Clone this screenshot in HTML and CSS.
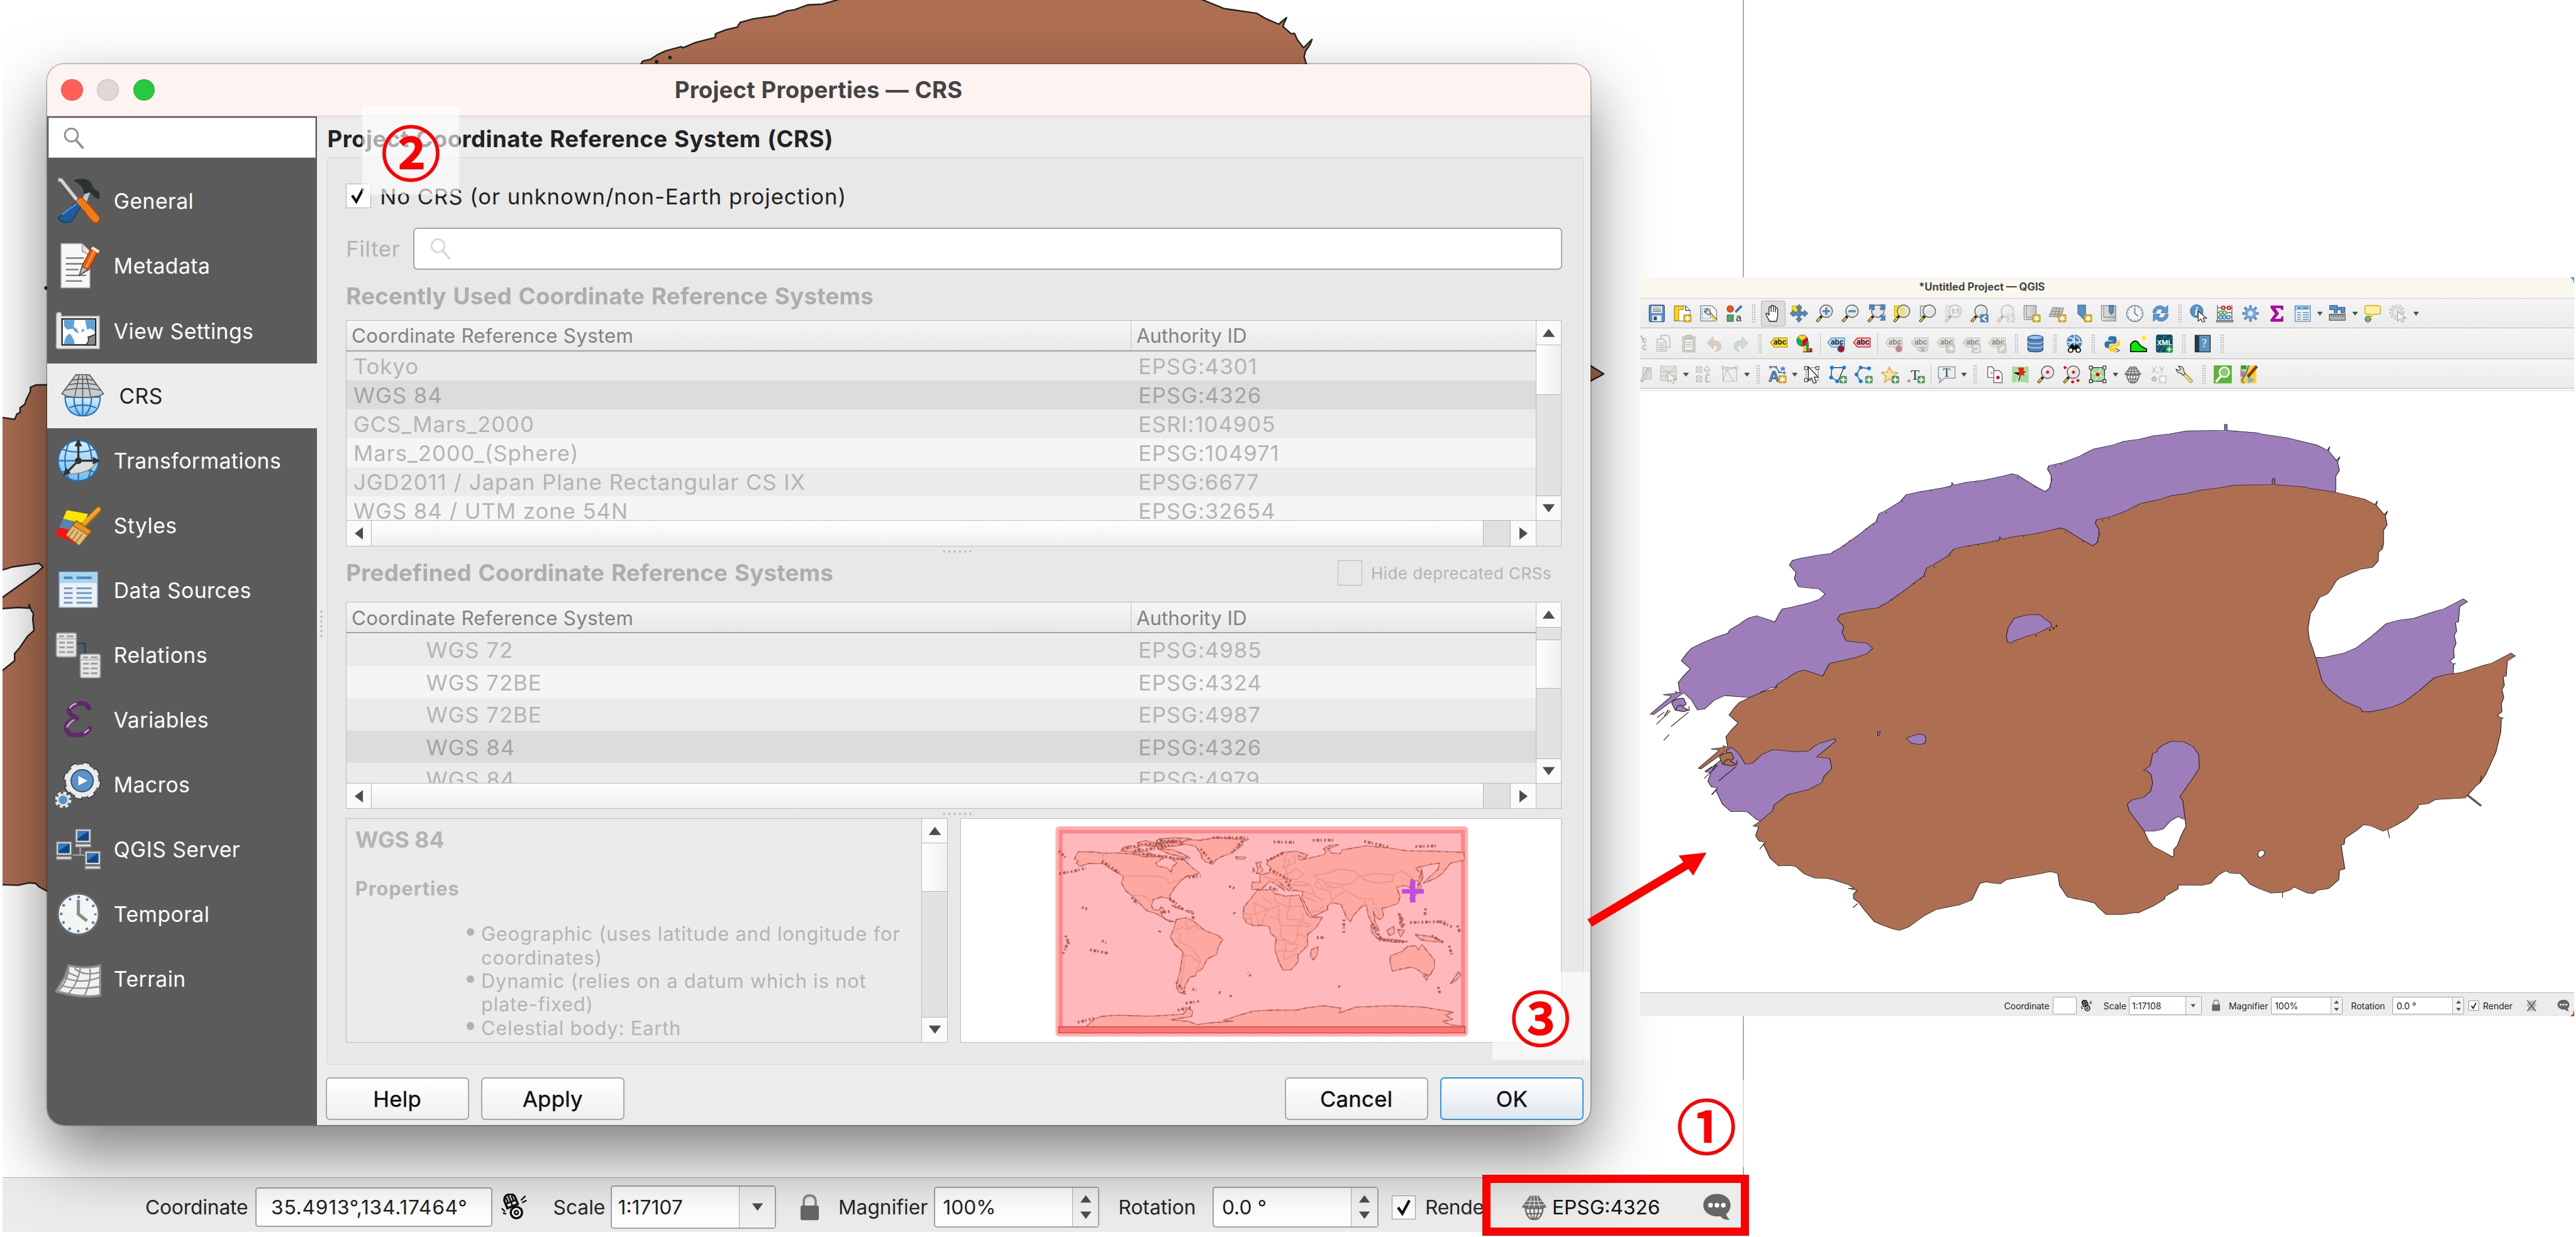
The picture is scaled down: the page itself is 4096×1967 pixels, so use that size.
FILE: index.html
```
<!DOCTYPE html>
<html lang="en">
<head>
<meta charset="utf-8">
<title>Project Properties — CRS</title>
<link rel="stylesheet" href="styles.css">
</head>
<body>
<svg class="defs" width="0" height="0">
<defs>
<linearGradient id="gSky" x1="0" y1="0" x2="0" y2="1"><stop offset="0" stop-color="#d8f0fd"/><stop offset="1" stop-color="#6dbdf0"/></linearGradient>
<linearGradient id="gPage" x1="0" y1="0" x2="1" y2="0"><stop offset="0" stop-color="#e6e6e6"/><stop offset="1" stop-color="#bdbdbd"/></linearGradient>
<path id="land" fill-rule="evenodd" d="M540,398 L560,391 580,386 600,381 615,376 616,368 619,374 640,367 668,362 700,352 715,346 725,350 755,378 770,390 777,382 780,365 780,350 774,335 776,326 800,318 811,312 828,302 838,294 850,285 880,276 900,266 925,261 950,252 975,248 1005,240 1067,239 1067,224 1071,224 1071,239 1123,245 1128,248 1170,257 1220,275 1237,288 1241,279 1239,290 1252,313 1258,304 1254,317 1257,338 1251,352 1251,385 1249,398 1243,405 1242,428 1233,443 1222,446 1215,447 1178,470 1172,478 1165,496 1158,509 1145,518 1136,545 1130,557 1126,595 1128,620 1133,640 1139,668 1149,723 1158,741 1165,750 1187,775 1213,791 1216,800 1230,800 1265,789 1285,776 1310,748 1335,716 1355,708 1380,703 1415,686 1430,680 1462,655 1469,662 1456,674 1454,712 1449,714 1451,735 1447,745 1450,765 1446,780 1447,800 1440,808 1443,814 1449,815 1446,818 1445,850 1437,900 1420,955 1411,975 1405,982 1391,1005 1413,1031 1411,1033 1389,1007 1386,1013 1337,1017 1325,1027 1309,1030 1308,1038 1290,1065 1270,1082 1258,1091 1250,1095 1230,1082 1218,1079 1207,1093 1187,1113 1186,1127 1181,1130 1184,1160 1187,1188 1178,1192 1177,1215 1167,1228 1160,1237 1142,1241 1135,1249 1125,1248 1103,1233 1097,1240 1085,1246 1065,1248 1045,1237 1030,1226 1024,1215 1014,1200 998,1199 990,1193 978,1203 965,1224 950,1229 911,1228 911,1238 890,1256 888,1264 870,1280 845,1297 838,1297 820,1301 792,1301 780,1285 773,1273 760,1268 728,1258 715,1230 712,1200 700,1195 680,1201 665,1205 627,1215 617,1225 597,1222 595,1220 583,1224 570,1265 550,1277 510,1289 490,1305 465,1332 450,1340 440,1337 418,1325 408,1318 392,1290 383,1272 374,1262 374,1250 380,1241 365,1237 375,1236 365,1227 340,1215 330,1212 310,1211 292,1200 278,1182 270,1180 250,1181 236,1162 225,1127 228,1122 218,1120 212,1106 217,1085 208,1082 220,1070 240,1045 243,1030 265,1005 300,992 322,975 325,960 338,940 335,916 325,914 313,912 345,872 343,867 320,877 310,884 300,897 280,899 240,894 222,906 207,927 195,930 185,905 172,887 122,941 117,940 152,895 138,892 160,888 158,884 166,888 163,862 172,845 183,828 168,808 177,790 185,777 203,764 225,750 245,740 248,732 265,717 270,711 280,702 293,697 323,712 330,692 335,680 350,676 380,665 397,656 406,643 395,630 378,628 362,625 355,605 358,590 347,572 352,560 365,555 395,547 416,543 420,538 430,530 465,493 480,475 490,465 495,445 505,438 530,415 Z
M627,612 L630,592 640,569 660,561 682,560 692,572 700,580 702,590 695,594 680,605 660,614 640,625 635,630 628,627Z
M461,866 L470,860 483,855 492,858 494,868 492,878 484,881 470,878Z M414,850 L418,849 417,858 414,859Z
M869,903 L876,900 877,893 885,883 900,873 920,874 935,885 945,905 946,940 935,965 914,1010 919,1020 924,1083 916,1106 910,1130 904,1140 904,1156 901,1158 892,1150 870,1133 862,1118 855,1095 830,1045 827,1028 835,1018 855,1011 866,995 869,975 866,955 860,946 854,945 865,933Z
M1044,1146 L1050,1142 1055,1146 1053,1154 1047,1161 1043,1155Z"/>
<symbol id="tri" viewBox="0 0 12 10"><path d="M0,1H12L6,9Z" fill="#4d4d4d"/></symbol>
<symbol id="lens" viewBox="0 0 24 24"><circle cx="9.5" cy="9" r="6.8" fill="none" stroke="currentColor" stroke-width="1.8"/><path d="M14.3,14.2L22,23" stroke="currentColor" stroke-width="2.4"/></symbol>
<symbol id="star1" viewBox="0 0 24 24"><rect x="13" y="13" width="11" height="11" rx="2" fill="#d1a313"/><path d="M18.5,14.5v8M15,16.5l7,4M15,20.5l7-4" stroke="#fff" stroke-width="1.6"/></symbol>
<symbol id="plus" viewBox="0 0 24 24"><rect x="14" y="14" width="10" height="10" rx="2" fill="#4f9a5c"/><path d="M19,15.5v7M15.5,19h7" stroke="#fff" stroke-width="2"/></symbol>
<symbol id="mag" viewBox="0 0 24 24"><path d="M1.5,23L8,15.5" stroke="#222" stroke-width="3.6"/><path d="M2,22.4L6,17.8" stroke="#ffd21e" stroke-width="2"/><circle cx="14" cy="9" r="8.2" fill="#e4e6e6" stroke="#666" stroke-width="1.2"/><path d="M9,8a6,6 0 0 1 5,-5" stroke="#fff" stroke-width="1.6" fill="none"/></symbol>
<symbol id="cursor" viewBox="0 0 24 24"><path d="M11,9V22L14.5,19.2 17,24 19.6,22.8 17.5,18.2H22Z" fill="#fff" stroke="#222" stroke-width="1"/></symbol>
<symbol id="save" viewBox="0 0 24 24"><rect x="2" y="1" width="20" height="22" rx="2" fill="#5b92c4" stroke="#2e4f70"/><rect x="5" y="2.5" width="14" height="9" fill="#eee"/><path d="M6.5,5H17.5M6.5,7.3H17.5M6.5,9.5H17.5" stroke="#777"/><rect x="6" y="14.5" width="12" height="8" fill="#eee"/><rect x="8" y="16" width="4" height="5" fill="#30506f"/></symbol>
<symbol id="layout" viewBox="0 0 24 24"><path d="M1,2H16L22,8V22H1Z" fill="#fff" stroke="#888"/><path d="M1.5,2.5H13V7H7V21H1.5Z" fill="#fdd51e" stroke="#c19a10"/><path d="M16,2V8H22" fill="none" stroke="#333"/><use href="#star1"/></symbol>
<symbol id="layouts" viewBox="0 0 24 24"><path d="M1,2H16L22,8V22H1Z" fill="#fff" stroke="#777"/><path d="M3,5H14V19H3Z" fill="#eaf2fb" stroke="#9ab8de"/><path d="M12,11L22,22" stroke="#8f7d28" stroke-width="4"/><path d="M13,13L22,22.5" stroke="#f1dd77" stroke-width="2.4"/><path d="M7,6Q12,5 13,9L14,12 12,14 9,12Q6,12 6,8L8,10 10,8Z" fill="#e0e0e0" stroke="#444" stroke-width=".9"/></symbol>
<symbol id="style" viewBox="0 0 24 24"><circle cx="6" cy="6" r="4.3" fill="#df5b1f" stroke="#b5430f"/><path d="M13,10L21,2" stroke="#3d77ad" stroke-width="3.2"/><rect x="2" y="14" width="8" height="8.5" fill="#5ba06b" stroke="#3a7a49"/><text x="13.5" y="22.5" font-size="13" font-family="Liberation Sans" fill="#222">a</text></symbol>
<symbol id="hand" viewBox="0 0 24 24"><path d="M7,22.5C6,19 3,16 2.5,12.5c1.5,-1.5 3,0 4,2V4.5c0,-2 2.6,-2 2.8,0V10 2.8c.2,-2 2.8,-2 3,0V10 3.5c.2,-1.8 2.7,-1.8 2.900,0V10.5 6c.3,-1.8 2.6,-1.6 2.8,0V15c0,3 -1.5,5 -1.7,7.5Z" fill="#fff" stroke="#222" stroke-width="1.1"/></symbol>
<symbol id="panto" viewBox="0 0 24 24"><rect x="3" y="2" width="12" height="13" fill="#ffe31a" stroke="#cdae00"/><path d="M12,0l4,5h-2.5v5H19V7.5l5,4.5-5,4.5V14h-5.5v5H16l-4,5-4-5h2.500v-5H5v2.500L0,12l5-4.500V10h5.500V5H8Z" fill="#5089c0" stroke="#2f5f90" stroke-width=".7"/></symbol>
<symbol id="zin" viewBox="0 0 24 24"><use href="#mag"/><path d="M14,4v10M9,9h10" stroke="#4a86c0" stroke-width="2.8"/></symbol>
<symbol id="zout" viewBox="0 0 24 24"><use href="#mag"/><path d="M9,9h10" stroke="#4a86c0" stroke-width="2.8"/></symbol>
<symbol id="zfull" viewBox="0 0 24 24"><use href="#mag"/><path d="M3,0h7l-2.500,2.500 3,3-2.500,2.500-3-3L3,7.500ZM24,0h-7l2.500,2.500-3,3L19,8l3-3 2,2.500ZM24,21h-7l2.500-2.500-3-3L19,13l3,3 2-2.500Z" fill="#5089c0" stroke="#2f5f90" stroke-width=".7"/></symbol>
<symbol id="zsel" viewBox="0 0 24 24"><rect x="2" y="2" width="14" height="14" fill="#ffe31a" stroke="#cdae00"/><use href="#mag"/><path d="M9,3H16V15H11Q7,11 9,3Z" fill="#f0df78"/></symbol>
<symbol id="zlay" viewBox="0 0 24 24"><rect x="2" y="2" width="13" height="14" fill="#ddd" stroke="#888"/><use href="#mag"/></symbol>
<symbol id="znat" viewBox="0 0 24 24"><g opacity=".35"><rect x="2" y="2" width="13" height="14" fill="#ddd" stroke="#888"/><use href="#mag"/><text x="8.5" y="12.5" font-size="9" font-family="Inter" font-weight="700" fill="#444">1:1</text></g></symbol>
<symbol id="zlast" viewBox="0 0 24 24"><use href="#mag"/><rect x="13" y="13" width="11" height="11" fill="#4f87bd"/><path d="M21,15l-4.500,3.500L21,22" stroke="#fff" stroke-width="2" fill="none"/></symbol>
<symbol id="znext" viewBox="0 0 24 24"><g opacity=".35"><use href="#mag"/><rect x="13" y="13" width="11" height="11" fill="#9ab"/><path d="M16,15l4.500,3.500L16,22" stroke="#fff" stroke-width="2" fill="none"/></g></symbol>
<symbol id="view" viewBox="0 0 24 24"><path d="M2,1.500H18V20H5Q2,22 2,17Z" fill="url(#gPage)" stroke="#8a8a8a"/><path d="M5,1.500V17H18" fill="none" stroke="#8a8a8a"/><use href="#star1"/></symbol>
<symbol id="v3d" viewBox="0 0 24 24"><path d="M6,4 20,5 17,17 1,16Z" fill="#c4c4c4" stroke="#8c8c8c"/><path d="M11,4 8,16M15,5 12,17M4,9 19,10M2,13 18,13" stroke="#8c8c8c"/><use href="#star1"/></symbol>
<symbol id="bmark" viewBox="0 0 24 24"><path d="M5,1H15V22L10,17 5,12Z" fill="#5b92c4" stroke="#3d6a96"/><use href="#star1"/></symbol>
<symbol id="bmarks" viewBox="0 0 24 24"><path d="M2,1.500H21V22H5Q2,22 2,17Z" fill="url(#gPage)" stroke="#8a8a8a"/><path d="M5,1.500V17H21" fill="none" stroke="#8a8a8a"/><path d="M12.500,1.500h5V10l-2.500,3-2.500-3Z" fill="#5b92c4" stroke="#3d5a76"/></symbol>
<symbol id="clock" viewBox="0 0 24 24"><circle cx="12" cy="12" r="10.700" fill="#f4f6f6" stroke="#6a6a6a" stroke-width="1"/><circle cx="12" cy="12" r="8.900" fill="none" stroke="#4b82b8" stroke-width="1.300" stroke-dasharray="1.300 3.360" stroke-dashoffset=".65"/><path d="M12,4.500V12L16.500,15.500" fill="none" stroke="#8a8a86" stroke-width="1.700"/></symbol>
<symbol id="refresh" viewBox="0 0 24 24"><path d="M2,11C2,2 13,-1 18,5L21.500,1.500V11H12.500L15,8C11,4 6,7 6,11Z" fill="#5f9bd3" stroke="#3470a9" stroke-width=".8"/><path d="M22,13C22,22 11,25 6,19L2.500,22.500V13H11.500L9,16C13,20 18,17 18,13Z" fill="#5f9bd3" stroke="#3470a9" stroke-width=".8"/></symbol>
<symbol id="info" viewBox="0 0 24 24"><circle cx="9" cy="9" r="8.500" fill="#5b92c4" stroke="#2f5f90" stroke-width=".7"/><text x="6.500" y="14.500" font-size="15" font-style="italic" font-weight="700" font-family="Liberation Serif" fill="#fff">i</text><use href="#cursor"/></symbol>
<symbol id="abacus" viewBox="0 0 24 24"><path d="M2.500,1V21M21.500,1V21M2,4.500H22M2,11H22M2,17H22" stroke="#666" stroke-width="1.100"/><g stroke-width="1.100"><g fill="#f8aaaa" stroke="#c00000"><circle cx="10" cy="4.500" r="2.300"/><circle cx="17.500" cy="4.500" r="2.300"/></g><g fill="#b8f0b8" stroke="#3a9a3a"><circle cx="7" cy="11" r="2.300"/><circle cx="12" cy="11" r="2.300"/></g><g fill="#bcdcf8" stroke="#3a70a8"><circle cx="6.500" cy="17" r="2.300"/><circle cx="11.500" cy="17" r="2.300"/><circle cx="17" cy="17" r="2.300"/></g></g><rect x="1" y="21" width="22" height="2.500" fill="#999" stroke="#444" stroke-width=".6"/></symbol>
<symbol id="gear" viewBox="0 0 24 24"><path d="M12,1V23M1,12H23M4,4L20,20M20,4L4,20" stroke="#5b8fc8" stroke-width="3.400"/><circle cx="12" cy="12" r="5.500" fill="#e4edf6" stroke="#74a5da" stroke-width="4"/></symbol>
<symbol id="sigma" viewBox="0 0 24 24"><path d="M4,2H20V7H18C17.500,5 17,4.500 14,4.500H9L14.500,12 8.500,19.500H14C17,19.500 18,19 18.500,16H20V22.500H4V20L10,12.500 4,4.500Z" fill="#c400b4" stroke="#6a0062" stroke-width=".7"/></symbol>
<symbol id="table" viewBox="0 0 24 24"><rect x="2" y="2" width="20" height="20.500" fill="#eef1f3" stroke="#4f87bd"/><rect x="2.500" y="2.500" width="19" height="5" fill="#9ccbe8"/><path d="M5,5h5M12,5h7" stroke="#3d77ad" stroke-width="1.500"/><path d="M4.500,11h5M12,11h8M4.500,14h5M12,14h8M4.500,17h5M12,17h8M4.500,20h5M12,20h8" stroke="#5b92c4" stroke-width="1.300"/></symbol>
<symbol id="measure" viewBox="0 0 24 24"><path d="M2,1.500H12V4H22V11H17V7H12V11H8V7H2Z" fill="#5b92c4" stroke="#2f5f90"/><rect x="1.500" y="13" width="21" height="8" fill="#b5b5b5" stroke="#555"/><path d="M4,13v3M7,13v4M10,13v3M13,13v4M16,13v3M19,13v4" stroke="#555"/></symbol>
<symbol id="tip" viewBox="0 0 24 24"><circle cx="6" cy="19.500" r="3.800" fill="#6dbb72" stroke="#333" stroke-width=".8"/><path d="M4,1.500H20Q22.500,1.500 22.500,4V10Q22.500,13 20,13H13L8,19.500 9.500,13H4Q2,13 2,10V4Q2,1.500 4,1.500Z" fill="#fdf0a0" stroke="#caa400"/></symbol>
<symbol id="action" viewBox="0 0 24 24"><g opacity=".4"><circle cx="10" cy="10" r="9" fill="none" stroke="#999" stroke-width="3" stroke-dasharray="3 2"/><circle cx="10" cy="10" r="6.500" fill="#ccc" stroke="#888"/><path d="M8,6.500V13.500L14,10Z" fill="#fff"/><use href="#cursor"/></g></symbol>
<symbol id="cut" viewBox="0 0 24 24"><path d="M17,1L21,11" stroke="#bbb" stroke-width="2"/><circle cx="22" cy="8" r="2.500" fill="none" stroke="#c5bcbc" stroke-width="1.800"/><circle cx="22" cy="17" r="3" fill="none" stroke="#c5bcbc" stroke-width="2"/></symbol>
<symbol id="copy" viewBox="0 0 24 24"><g fill="#efefef" stroke="#b4b4b4"><path d="M9,1H18L21,4V17H9Z"/><path d="M4,6H12L16,10V22H4Z"/><path d="M6,11h8M6,14h8M6,17h8M6,19.500h8"/></g></symbol>
<symbol id="paste" viewBox="0 0 24 24"><g stroke="#b4b4ae"><rect x="4" y="3" width="16" height="20" fill="#dcdcd4"/><rect x="6.500" y="6" width="11" height="15" fill="#f2f2f2"/><rect x="8" y="1" width="8" height="4" fill="#ccc"/><path d="M8,10h8M8,13h8M8,16h8"/></g></symbol>
<symbol id="undo" viewBox="0 0 24 24"><path d="M2,11L10,3V8C18,8 22,12 20,18 19,21 16,22 13,22 18,18 17,14 10,14V19Z" fill="#ddcdc8" stroke="#cbb9b4" stroke-width=".8"/></symbol>
<symbol id="redo" viewBox="0 0 24 24"><path d="M22,11L14,3V8C6,8 2,12 4,18 5,21 8,22 11,22 6,18 7,14 14,14V19Z" fill="#cfd9d2" stroke="#bac6be" stroke-width=".8"/></symbol>
<symbol id="tag" viewBox="0 0 24 24"><path d="M6,4.500H23V16.500H6L1,10.500Z" stroke-width="1.100"/><text x="5" y="13.700" font-size="9.500" font-weight="700" font-family="Inter" stroke="none" class="tagtxt">abc</text></symbol>
<symbol id="pie" viewBox="0 0 24 24"><circle cx="9" cy="8" r="7.500" fill="#ffd21e" stroke="#333" stroke-width=".6"/><path d="M9,8V15.500A7.500,7.500 0 0 1 3,3.500Z" fill="#19a84a"/><path d="M9,8L15,3.500A7.500,7.500 0 0 1 9,15.500Z" fill="#c3102c"/><path d="M10,15h3.500v8H10z" fill="#ffc91e"/><path d="M14,9.500h3.500v13.500H14z" fill="#1ba03a"/><path d="M18,18h4v5h-4z" fill="#d01020"/><path d="M10,23H22" stroke="#800" stroke-width="1"/></symbol>
<symbol id="pinr" viewBox="0 0 24 24"><path d="M18.500,11v5" stroke="#555" stroke-width="3"/><circle cx="18.500" cy="19" r="4.500" fill="#b5101e"/></symbol>
<symbol id="db" viewBox="0 0 24 24"><path d="M2,4V20C2,24 22,24 22,20V4Z" fill="#4f87bd" stroke="#2c4c6c"/><ellipse cx="12" cy="4" rx="10" ry="3" fill="#9cc4e8" stroke="#2c4c6c"/><path d="M2,9.500C3,13 21,13 22,9.500M2,15C3,18.500 21,18.500 22,15" fill="none" stroke="#c4dcf0" stroke-width="1.200"/></symbol>
<symbol id="meta" viewBox="0 0 24 24"><circle cx="12" cy="10" r="10" fill="#4a80b4"/><path d="M5,5C8,3 12,6 10,9S5,12 4,14M14,3C18,4 20,8 18,10S14,12 16,15M2,10H22M12,0V18" stroke="#cfe3f5" stroke-width="1.800" fill="none"/><path d="M4,20L8,13h3l1,3 1-3h3l4,7Z" fill="#111"/><circle cx="7" cy="20.500" r="3" fill="#fff" stroke="#111" stroke-width="1.600"/><circle cx="17" cy="20.500" r="3" fill="#fff" stroke="#111" stroke-width="1.600"/></symbol>
<symbol id="python" viewBox="0 0 24 24"><path d="M11,2C6,2 6,4 6,8H12V9H4C0,9 0,18 5,18H7V15C7,12 9,12 11,12H15C17,12 17,10 17,8V5C17,2 14,2 11,2Z" fill="#2f74a8"/><path d="M12,23C17,23 17,21 17,17H11V16H19C23,16 23,7 18,7V10C18,13 16,13 14,13H10C8,13 7,15 7,17V20C7,23 10,23 12,23Z" fill="#fdd02e"/><path d="M16,18.500l5,2.500-5,2.500" stroke="#444" fill="none"/></symbol>
<symbol id="green" viewBox="0 0 24 24"><path d="M1.500,22V13Q6,6 11,10 14,16 22.500,19V22.500H1.500Z" fill="#00ee00" stroke="#111" stroke-width="1.500"/><path d="M17,1l2,2 3-2-1,3 2,2-3,1-3,1z" fill="#ffee00"/></symbol>
<symbol id="xml" viewBox="0 0 24 24"><rect x="1" y="0" width="22" height="24" rx="3" fill="#0e4f66"/><path d="M2,20C8,16 6,6 14,1M6,23C12,18 12,8 22,4" stroke="#4e8497" fill="none"/><text x="2" y="14" font-size="9" font-weight="700" font-family="Inter" fill="#fff">XML</text><rect x="14" y="15" width="9" height="9" rx="1" fill="#119b3f"/><path d="M18.500,16v7M15,19.500h7" stroke="#fff" stroke-width="1.500"/></symbol>
<symbol id="helpb" viewBox="0 0 24 24"><rect x="2" y="1" width="20" height="22" fill="#5b92c4" stroke="#222"/><rect x="2.500" y="1.500" width="5" height="21" fill="#26394e"/><text x="10.500" y="17" font-size="15" font-family="Liberation Serif" fill="#fff">?</text></symbol>
<symbol id="pencil" viewBox="0 0 24 24"><path d="M12,3H23V18H12Z" fill="#ddd" stroke="#bbb"/><path d="M10,22L20,4" stroke="#b5b0a8" stroke-width="4"/><path d="M11,20L20,5" stroke="#e4e0d8" stroke-width="2"/></symbol>
<symbol id="selgrey" viewBox="0 0 24 24"><g opacity=".5"><rect x="1" y="1" width="21" height="19" fill="#d8d6c4" stroke="#999"/><path d="M1,1L12,10 22,1M1,8H22M8,8V20M1,14H22" stroke="#999" fill="none"/></g><g opacity=".7"><path d="M11,9V22L14.500,19.200 17,24 19.600,22.800 17.500,18.200H22Z" fill="#fff" stroke="#999"/></g></symbol>
<symbol id="grideps" viewBox="0 0 24 24"><g fill="none" stroke="#bdbdbd"><path d="M2,2h7v7H2zM2,2l7,7M9,2L2,9M2,14h7v8H2zM2,14l7,8M9,14L2,22M16,1l4,5-4,4-4-4zM12,6h8"/><path d="M20,13C14,11 13,17 17,17 12,18 14,24 20,21" stroke-width="2"/></g></symbol>
<symbol id="polygrey" viewBox="0 0 24 24"><g fill="#eee" stroke="#bdbcb4"><path d="M3,3H21V21H3ZM3,21L8,6 21,3M8,6L17,21" /><circle cx="3" cy="3" r="1.800"/><circle cx="21" cy="3" r="1.800"/><circle cx="8" cy="4" r="1.800"/></g></symbol>
<symbol id="anno" viewBox="0 0 24 24"><path d="M2,2h8l4,7 7,1" stroke="#333" fill="none"/><g fill="#5089c0"><circle cx="2.500" cy="2.500" r="1.800"/><circle cx="10" cy="2.500" r="1.800"/><circle cx="14" cy="9" r="1.800"/><circle cx="21" cy="10" r="1.800"/><path d="M19,0l1,3h3l-2,2 1,3-3-2-3,2 1-3-2-2h3z"/></g><text x="0" y="22" font-size="20" font-weight="700" font-family="Liberation Sans" fill="#5b92c4" stroke="#234" stroke-width=".6">A</text><use href="#star1"/></symbol>
<symbol id="modify" viewBox="0 0 24 24"><path d="M4,3H20V20H4Z" fill="none" stroke="#555" stroke-dasharray="2 1.500"/><g fill="#fff" stroke="#444"><path d="M2,1.500h4v4H2zM17,1.500h4v4h-4zM2,17.500h4v4H2z"/></g><path d="M7,2V20L11,16.500 14,24 17.500,22.500 14.500,15.500H20Z" fill="#fff" stroke="#222" stroke-width="1.100"/></symbol>
<symbol id="polyadd" viewBox="0 0 24 24"><path d="M4,3H20L12,21 3,16Z" fill="none" stroke="#222"/><g fill="#0a7cff"><circle cx="4" cy="3" r="2.500"/><circle cx="20" cy="3" r="2.500"/><circle cx="3" cy="16" r="2.500"/><circle cx="11" cy="21" r="2.500"/></g><use href="#plus"/></symbol>
<symbol id="lineadd" viewBox="0 0 24 24"><path d="M20,4L8,3 2,12 8,21" fill="none" stroke="#222"/><g fill="#0a7cff"><circle cx="19" cy="4" r="2.500"/><circle cx="8" cy="3" r="2.500"/><circle cx="2.500" cy="12" r="2.500"/><circle cx="8" cy="21" r="2.500"/></g><use href="#plus"/></symbol>
<symbol id="staradd" viewBox="0 0 24 24"><path d="M11,2l3,7 8,.5-6,5 2,8-7-4.500-6.500,4.500 2-8-6-5 7.500-.5z" fill="#fde0a0" stroke="#d8923a"/><use href="#plus"/></symbol>
<symbol id="textadd" viewBox="0 0 24 24"><rect x="1" y="19" width="3.500" height="3.500" fill="#999"/><text x="5" y="19" font-size="19" font-family="Liberation Serif" fill="#333">T</text><use href="#plus"/></symbol>
<symbol id="textbox" viewBox="0 0 24 24"><path d="M1,2H23V17H9L2,23 4,17H1Z" fill="#e4f0f4" stroke="#888"/><text x="7" y="15" font-size="16" font-family="Liberation Serif" fill="#333">T</text></symbol>
<symbol id="pagepin" viewBox="0 0 24 24"><g fill="#fff" stroke="#555"><path d="M3,2H9L12,6V16H3Z"/><path d="M11,7H18L22,11V23H11Z"/></g><circle cx="8" cy="10" r="1.600" fill="#f99"/><circle cx="16.500" cy="16" r="2.200" fill="#e00"/></symbol>
<symbol id="mappin" viewBox="0 0 24 24"><path d="M1,1Q12,3 23,1V23Q12,21 1,23Z" fill="#9fe0a0"/><path d="M1,10L10,14 23,8M6,23L12,12" stroke="#d4f4c8" stroke-width="1.500"/><path d="M9,3h8l-1,7 2,3H8l3-3z" fill="#ff1a10"/><path d="M12,13L10,20" stroke="#800" stroke-width="1.300"/></symbol>
<symbol id="magdot" viewBox="0 0 24 24"><use href="#mag"/><circle cx="14" cy="9" r="2" fill="#f00"/></symbol>
<symbol id="magdots" viewBox="0 0 24 24"><use href="#mag"/><g fill="#f00"><circle cx="14" cy="9" r="2"/><circle cx="3" cy="3" r="2"/><circle cx="13" cy="22" r="2"/><circle cx="20" cy="20" r="2"/></g></symbol>
<symbol id="mapext" viewBox="0 0 24 24"><rect x="3" y="3" width="18" height="18" fill="#a8dca0" stroke="#222"/><path d="M3,9L21,16M9,21L16,3" stroke="#e8f8e0"/><circle cx="12" cy="12" r="2.500" fill="#e00"/><g fill="#fff" stroke="#222"><path d="M1,1h4v4H1zM19,1h4v4h-4zM1,19h4v4H1zM19,19h4v4h-4z"/></g></symbol>
<symbol id="crsg" viewBox="0 0 24 24"><path d="M8,1.500H16L23.500,12 20,13H4L.5,12Z" fill="#707070"/><path d="M4,13Q5,23 12,23.500 19,23 20,13Z" fill="#f4f4f4" stroke="#707070" stroke-width="1.500"/><path d="M12,13V23M8,13Q8,19 11,23M16,13Q16,19 13,23M5,18H19" stroke="#707070" stroke-width="1.300" fill="none"/><path d="M12,2V12M9.500,2L7,12M14.500,2L17,12M5,6.500H19M3,9.700H21" stroke="#ddd" stroke-width=".9"/></symbol>
<symbol id="xy" viewBox="0 0 24 24"><text x="2" y="10" font-size="11" font-family="Inter" fill="#bbb">X,Y</text><circle cx="6" cy="18" r="3" fill="#ccc" stroke="#aaa"/><rect x="12" y="13" width="11" height="11" rx="2" fill="#d8d6cc"/><path d="M17.500,14.500v8M14,16.500l7,4M14,20.500l7-4" stroke="#fff" stroke-width="1.600"/></symbol>
<symbol id="wrench" viewBox="0 0 24 24"><path d="M10,10L22,22" stroke="#8f7d28" stroke-width="4.600"/><path d="M12,12.500L21.500,21.700" stroke="#f1dd77" stroke-width="3"/><path d="M4,1Q11,1 11,7L13,11 10,13 7,10Q2,11 1,5L4,7 7,5Z" fill="#e0e0e0" stroke="#444"/></symbol>
<symbol id="gsearch" viewBox="0 0 24 24"><path d="M0,0H24V24H0Z" fill="#5cb338"/><circle cx="14" cy="9" r="6.500" fill="#8ccc74" stroke="#fff" stroke-width="2"/><path d="M9.500,14L3,22" stroke="#fff" stroke-width="3"/></symbol>
<symbol id="osm" viewBox="0 0 24 24"><path d="M1,0H22V24H1Z" fill="#ffd22a"/><path d="M1,5L8,9 1,14ZM10,12L20,20 12,24Z" fill="#7fb0ee"/><path d="M2,0H9V5H2Z" fill="#18a058"/><path d="M2,9H7V15H2Z" fill="#d06a90"/><path d="M12,0L9,10 3,20 6,24" stroke="#3f7fe0" stroke-width="2" fill="none"/><path d="M11,15L23,1" stroke="#8c3a10" stroke-width="4"/></symbol>
<symbol id="bubble" viewBox="0 0 24 24"><path d="M12,.8C19,.8 23.700,5 23.700,10.500 23.700,14 22,16.500 20,18 20.500,20.500 22,22 23,23 19,23.300 16.500,22 15,20 6,21 .3,16 .3,10.500 .3,5 5,.8 12,.8Z" fill="#666"/><g fill="#fff"><circle cx="6.500" cy="10.500" r="2"/><circle cx="12" cy="10.500" r="2"/><circle cx="17.500" cy="10.500" r="2"/></g></symbol>
<symbol id="lock" viewBox="0 0 24 30"><path d="M5.500,14V9Q5.500,2 12,2T18.500,9V14" fill="none" stroke="#8a8a8a" stroke-width="2.600"/><rect x="2" y="13" width="20" height="16" rx="2" fill="#666"/></symbol>
<symbol id="mouse" viewBox="0 0 24 24"><g transform="rotate(-22 11 12)" fill="none" stroke="#111"><path d="M6,11V4Q7,0 11,0T16,4V11Z" stroke-width="2"/><path d="M11,1V11M6,7H16M8.500,2V7M13.500,2V7" stroke-width="1.500"/><circle cx="12" cy="17.500" r="5" stroke-width="2" fill="#fff"/><circle cx="12" cy="17.500" r="1.700" stroke-width="1.500"/></g><path d="M1,13l3,3M2,17l3,1M18,6l4-4M19,8l4-2" stroke="#111" stroke-width="1.300"/></symbol>
<symbol id="nocrs" viewBox="0 0 24 24"><path d="M8,1.500H16L23.500,12 20,13Q19,23 12,23.500 5,23 4,13L.5,12Z" fill="#bbb"/><path d="M3,1L21,24M21,1L3,24" stroke="#666" stroke-width="2.600"/></symbol>
<symbol id="tools" viewBox="0 0 48 48"><path d="M3,2L6,2 25,26" stroke="#cfd4d6" stroke-width="3.500" fill="none"/><path d="M34,14L29,28" stroke="#c4c8ca" stroke-width="5"/><path d="M20,2Q30,-1 37,4L40,11 46,15 46,22 42,21 36,15 30,17Q29,7 20,4Z" fill="#2c3232"/><path d="M22,25Q25,20 29,26L17,45Q8,49 3,42Z" fill="#1f5c9c" stroke="#123c6a"/><path d="M7,38L22,27" stroke="#4a8cc8" stroke-width="2"/><path d="M21,24L27,20Q34,26 46,41 47,46 42,47 38,46 30,34 24,28Z" fill="#f37b16" stroke="#c04a00"/></symbol>
<symbol id="metad" viewBox="0 0 48 48"><path d="M6,1H28L36,9V47H6Z" fill="#f7f7f7" stroke="#bbb"/><path d="M28,1V9L36,13" fill="#ddd" stroke="#999"/><path d="M11,16H30M11,22H30M11,28H24M11,34H32M11,40H28" stroke="#777" stroke-width="1.500"/><path d="M25,34L28,24 38,5 45,9 35,28Z" fill="#ee5a1c" stroke="#8a3a10"/><path d="M37,6L39,4 46,8 45,11Z" fill="#eee"/><path d="M25,34L28,25 34,28Z" fill="#bbb" stroke="#555"/><path d="M41,8L32,26" stroke="#ff9a30" stroke-width="2"/></symbol>
<symbol id="viewset" viewBox="0 0 48 48"><path d="M1,8Q1,5 4,5T6,9H46V43H3Q0,43 1,38Z" fill="#e8e8e8" stroke="#aaa"/><rect x="7" y="12" width="35" height="27" fill="#fff" stroke="#222" stroke-width="1.500"/><path d="M9,13H20L19,22 12,23 9,19ZM31,13H41V25L37,22 33,23ZM9,38Q10,29 15,27 20,33 20,38Z" fill="#5ba3dc"/><path d="M17,19l5,3 3,5 -5,-2zM28,22l3,2 -4,2z" fill="#5ba3dc"/><path d="M42,28V39L32,39Q36,34 34,31Z" fill="#888" stroke="#222"/></symbol>
<symbol id="crsic" viewBox="0 0 48 48"><path d="M4,26H44Q43,47 24,47.500 5,47 4,26Z" fill="url(#gSky)" stroke="#2f6fb0" stroke-width="1.500"/><path d="M24,26V47M14,26Q14,40 22,47M34,26Q34,40 26,47M9,38Q24,32 39,38" stroke="#2f6fb0" stroke-width="1.500" fill="none"/><path d="M16,1Q24,-.5 32,1L47.500,22 42,25Q24,28 6,25L.5,22Z" fill="#c8ccce" stroke="#555" stroke-width="1.200"/><path d="M24,1V26M20,1L15,25M28,1L33,25M12,7Q24,4 36,7M8,12Q24,9 40,12M4,18Q24,14 44,18" stroke="#555" stroke-width="1.100" fill="none"/></symbol>
<symbol id="transf" viewBox="0 0 48 48"><circle cx="24" cy="24" r="21" fill="url(#gSky)" stroke="#2f6fb0" stroke-width="1.400"/><path d="M24,3V45M3,24H45M14,6Q6,24 14,43M34,6Q42,24 34,43M7,12Q24,18 41,12M7,36Q24,30 41,36" stroke="#2f6fb0" stroke-width="1.500" fill="none"/><path d="M24,24H44Q38,38 12,38Z" fill="#ddd" stroke="#888"/><path d="M24,24V5M24,24H42M24,24L11,37" stroke="#333" stroke-width="2.200"/><path d="M24,1l-4,8h8zM47,24l-8-4v8zM8,40l3-9 5,6z" fill="#333"/><circle cx="24" cy="24" r="3.500" fill="#333"/></symbol>
<symbol id="styles" viewBox="0 0 48 48"><path d="M12,8L34,12 30,22 8,17Z" fill="#ffe600"/><path d="M8,17L30,22 26,32 4,26Z" fill="#5b84ad"/><path d="M4,26L26,32 24,44 0,34Z" fill="#ff1010"/><path d="M30,23L45,8" stroke="#b36a10" stroke-width="6" stroke-linecap="round"/><path d="M30,22L45,7" stroke="#f0a42a" stroke-width="4" stroke-linecap="round"/><path d="M22,19L38,30 34,34 18,24Z" fill="#e8951c" stroke="#8a5a10"/><path d="M18,24L34,34 25,45 11,34Z" fill="#e6bb74" stroke="#9a6c2c"/><path d="M20,28l-6,8M24,30l-6,9M28,33l-7,9" stroke="#9a6c2c"/></symbol>
<symbol id="dsrc" viewBox="0 0 48 48"><rect x="4" y="5" width="40" height="37" fill="#f0f0f2" stroke="#7fa9cf"/><rect x="4.500" y="5.500" width="39" height="11" fill="#a6d5f0"/><path d="M9,11h9M22,11h16" stroke="#4c86bc" stroke-width="2.500"/><path d="M9,22h9M22,22h16M9,27h9M22,27h16M9,32h9M22,32h16M9,37h9M22,37h16" stroke="#6a9fd0" stroke-width="2"/></symbol>
<symbol id="relat" viewBox="0 0 48 48"><path d="M22,12H31V24" stroke="#24476a" stroke-width="2" fill="none"/><g id="rt"><rect x="1" y="1" width="21" height="25" rx="2" fill="#e4e4e2" stroke="#999" stroke-width="1.200"/><path d="M1.500,7H21.500" stroke="#aaa"/><path d="M4,4.500h5M12,4.500h7M4,11h6M12,11h7M4,16h6M12,16h7M4,21h6M12,21h7" stroke="#999" stroke-width="1.800"/></g><use href="#rt" x="25" y="22"/></symbol>
<symbol id="vari" viewBox="0 0 48 48"><path d="M35,12Q33,6 25,7T14,14Q15,20 24,22.500 12,24 11,32 12,40 22,40T36,33" fill="none" stroke="#5f2b66" stroke-width="4.800" stroke-linecap="round"/><path d="M15,12Q17,8 22,7M12,32Q15,26 20,24M30,38L35,34" stroke="#c9a6cc" stroke-width="1.800" fill="none"/></symbol>
<symbol id="macro" viewBox="0 0 48 48"><circle cx="28" cy="20" r="17.500" fill="none" stroke="#333" stroke-width="4.500" stroke-dasharray="8 5.740"/><circle cx="28" cy="20" r="17" fill="#e8e8e8" stroke="#e8e8e8" stroke-width="3.500" stroke-dasharray="6.350 7" stroke-dashoffset="-.8"/><circle cx="28" cy="20" r="15.500" fill="#ececec"/><circle cx="28" cy="20" r="11.500" fill="#5b92c8" stroke="#2e4f70" stroke-width="1.300"/><path d="M24,15V25L33.500,20Z" fill="#fff"/><circle cx="8" cy="40" r="7" fill="none" stroke="#e4e4e4" stroke-width="3.500" stroke-dasharray="3.200 2.300"/><circle cx="8" cy="40" r="5.500" fill="#5b92c8" stroke="#e4e4e4" stroke-width="1.800"/></symbol>
<symbol id="server" viewBox="0 0 48 48"><path d="M18,30H32M26,22V30" stroke="#999" stroke-width="1.800"/><g id="pc"><rect x="21" y="3" width="16" height="14" fill="#dcdcd4" stroke="#777"/><rect x="23" y="5" width="12" height="10" fill="#10458a"/><path d="M23,5H35L23,13Z" fill="#3a78bc"/><rect x="21" y="18.500" width="16" height="3" fill="#dcdcd4" stroke="#888"/></g><use href="#pc" x="-20" y="13"/><use href="#pc" x="10" y="23"/></symbol>
<symbol id="terr" viewBox="0 0 48 48"><path d="M14,10Q32,14 47,10V41Q30,45 1,37Q6,28 10,22Z" fill="#f0f0f0" stroke="#8d8d8d" stroke-width="2.400"/><path d="M14,11Q14,24 4,36M26,13Q24,28 14,39M36,13Q38,26 30,42M10,23Q28,30 47,22M6,31Q24,36 47,32M20,13Q30,22 47,17M12,17L24,22" stroke="#8d8d8d" stroke-width="1.500" fill="none"/></symbol>
</defs>
</svg>

<main class="stage">
  <section class="qgis">
    <div class="canvas">
      <svg class="bgmap" viewBox="4 0 2877 1947" width="2877" height="1947">
        <g fill="#ae6e52" stroke="#222" stroke-width="2.500" stroke-linejoin="round">
          <path d="M1059,106L1062,101 1075,98 1087,90 1100,84 1126,77 1128,79 1150,70 1182,62V56L1200,49 1218,45 1223,37 1245,31 1281,26 1300,18 1313,16 1335,8 1358,7 1390,-2H1983L2022,14 2077,22 2090,30 2113,40 2126,29 2122,38 2120,44 2134,56 2139,55 2144,66 2154,79 2168,65 2165,73 2157,85 2155,94 2160,110V300H1059Z"/>
          <path d="M2620,598L2628,604 2650,618 2628,630Z"/>
          <path d="M0,690H4L24,693 28,684 33,682 33,674 41,668 43,661 50,647 50,640 60,636 90,636V1475L78,1473 65,1466 59,1460 48,1459 30,1463 0,1462Z"/>
          <path d="M0,943L20,937 64,931 71,937 60,947 38,963 0,990Z" fill="#fff"/>
          <path d="M0,1006L30,1004 48,1005V999L51,1008 55,1014 54,1022 56,1042 45,1052 32,1071 24,1080V1092L4,1108H0Z" fill="#fff"/>
        </g>
        <g fill="#222"><circle cx="1107" cy="95" r="3"/><circle cx="1085" cy="102" r="3"/><circle cx="76" cy="476" r="3"/></g>
      </svg>
    </div>
    <footer class="status">
      <label class="lb w-coord">Coordinate</label>
      <div class="fld f-coord">35.4913°,134.17464°</div>
      <svg class="s-mouse"><use href="#mouse"/></svg>
      <label class="lb w-scale">Scale</label>
      <div class="fld combo"><span>1:17107</span><i><svg><use href="#tri"/></svg></i></div>
      <svg class="s-lock"><use href="#lock"/></svg>
      <label class="lb w-mag">Magnifier</label>
      <div class="fld spin"><span>100%</span><i><svg class="up"><use href="#tri"/></svg><svg><use href="#tri"/></svg></i></div>
      <label class="lb w-rot">Rotation</label>
      <div class="fld spin"><span>0.0 °</span><i><svg class="up"><use href="#tri"/></svg><svg><use href="#tri"/></svg></i></div>
      <span class="chk"><svg viewBox="0 0 24 24"><path d="M6,12L10.500,18.500 18,4.500" fill="none" stroke="#111" stroke-width="2.800"/></svg></span>
      <label class="lb w-rend">Rende</label>
      <svg class="s-crs"><use href="#crsg"/></svg>
      <label class="lb w-epsg">EPSG:4326</label>
      <svg class="s-bub"><use href="#bubble"/></svg>
    </footer>

    <section class="dialog">
      <header class="tbar"><span class="dot red"></span><span class="dot gray"></span><span class="dot green"></span><h1>Project Properties — CRS</h1></header>
      <div class="body">
        <nav class="side">
          <div class="search"><svg><use href="#lens"/></svg></div>
          <ul>
            <li><svg><use href="#tools"/></svg>General</li>
            <li><svg><use href="#metad"/></svg>Metadata</li>
            <li><svg><use href="#viewset"/></svg>View Settings</li>
            <li class="on"><svg><use href="#crsic"/></svg>CRS</li>
            <li><svg><use href="#transf"/></svg>Transformations</li>
            <li><svg><use href="#styles"/></svg>Styles</li>
            <li><svg><use href="#dsrc"/></svg>Data Sources</li>
            <li><svg><use href="#relat"/></svg>Relations</li>
            <li><svg><use href="#vari"/></svg>Variables</li>
            <li><svg><use href="#macro"/></svg>Macros</li>
            <li><svg><use href="#server"/></svg>QGIS Server</li>
            <li><svg><use href="#clock"/></svg>Temporal</li>
            <li><svg><use href="#terr"/></svg>Terrain</li>
          </ul>
        </nav>
        <div class="vgrip"></div>
        <div class="pane">
          <h2>Project Coordinate Reference System (CRS)</h2>
          <div class="group">
            <div class="norow"><span class="cbx"><svg viewBox="0 0 24 24"><path d="M6,12L10.500,18.500 18,4.500" fill="none" stroke="#111" stroke-width="2.800"/></svg></span><span class="t-nocrs">No CRS (or unknown/non-Earth projection)</span></div>
            <div class="filter"><label>Filter</label><div class="finput"><svg><use href="#lens"/></svg></div></div>
            <h3 class="h-rec"><span>Recently Used Coordinate Reference Systems</span></h3>
            <div class="tbl t1">
              <div class="view">
                <div class="grid">
                  <div class="hd"><span>Coordinate Reference System</span><span>Authority ID</span></div>
                  <div class="rows">
                    <div><span>Tokyo</span><span>EPSG:4301</span></div>
                    <div class="sel"><span>WGS 84</span><span>EPSG:4326</span></div>
                    <div><span>GCS_Mars_2000</span><span>ESRI:104905</span></div>
                    <div class="alt"><span>Mars_2000_(Sphere)</span><span>EPSG:104971</span></div>
                    <div><span>JGD2011 / Japan Plane Rectangular CS IX</span><span>EPSG:6677</span></div>
                    <div class="alt"><span>WGS 84 / UTM zone 54N</span><span>EPSG:32654</span></div>
                  </div>
                </div>
                <div class="vs"><b><svg class="up"><use href="#tri"/></svg></b><em class="th1"></em><u></u><b><svg><use href="#tri"/></svg></b></div>
              </div>
              <div class="hs"><b><svg class="lf"><use href="#tri"/></svg></b><em></em><u></u><b><svg class="rt"><use href="#tri"/></svg></b><i></i></div>
            </div>
            <div class="h-pre"><span class="hgrip"></span><h3><span>Predefined Coordinate Reference Systems</span></h3><div class="hide"><span class="cbx off"></span><span>Hide deprecated CRSs</span></div></div>
            <div class="tbl t2">
              <div class="view">
                <div class="grid">
                  <div class="hd"><span>Coordinate Reference System</span><span>Authority ID</span></div>
                  <div class="rows">
                    <div><span>WGS 72</span><span>EPSG:4985</span></div>
                    <div class="alt"><span>WGS 72BE</span><span>EPSG:4324</span></div>
                    <div><span>WGS 72BE</span><span>EPSG:4987</span></div>
                    <div class="sel"><span>WGS 84</span><span>EPSG:4326</span></div>
                    <div><span>WGS 84</span><span>EPSG:4979</span></div>
                  </div>
                </div>
                <div class="vs"><b><svg class="up"><use href="#tri"/></svg></b><u class="pre"></u><em class="th2"></em><u></u><b><svg><use href="#tri"/></svg></b></div>
              </div>
              <div class="hs"><b><svg class="lf"><use href="#tri"/></svg></b><em></em><u></u><b><svg class="rt"><use href="#tri"/></svg></b><i></i></div>
            </div>
            <div class="split"><span class="hgrip"></span></div>
            <div class="low">
              <div class="infop">
                <div class="txt">
                  <h4>WGS 84</h4>
                  <h5>Properties</h5>
                  <ul><li>Geographic (uses latitude and longitude for<br>coordinates)</li><li>Dynamic (relies on a datum which is not<br>plate-fixed)</li><li>Celestial body: Earth</li></ul>
                </div>
                <div class="vs"><b><svg class="up"><use href="#tri"/></svg></b><em class="th3"></em><u></u><b><svg><use href="#tri"/></svg></b></div>
              </div>
              <div class="mapp">
                <svg class="world" viewBox="0 0 1568 1095" preserveAspectRatio="none">
                  <rect x="8" y="28" width="1527" height="1042" rx="16" fill="#ffb2b2"/>
                  <rect x="20" y="45" width="1503" height="1007" fill="#ff8688"/>
                  <rect x="34" y="63" width="1475" height="972" fill="#ffb9bc"/>
                  <g class="coast">
                    <g id="conts">
                    <path d="M78,190L92,155 150,155 185,162 230,160 290,165 330,178 360,180 420,175 400,190 378,210 385,225 420,235 435,255 442,225 460,210 440,190 480,190 500,215 515,235 540,260 520,270 490,275 470,300 450,330 435,360 430,375 437,400 427,385 400,378 370,390 362,420 370,442 390,445 400,428 408,440 400,470 415,490 445,500 430,500 400,475 380,460 345,445 320,410 290,370 270,350 252,310 260,275 220,245 183,212 130,212 100,225 85,210 95,200Z"/>
                    <path d="M470,112L500,95 540,98 600,85 690,92 722,94 697,105 700,120 670,150 650,165 620,180 600,195 590,215 565,205 550,185 545,160 525,125Z"/>
                    <path d="M250,150L265,130 290,125 320,140 300,155ZM310,110L340,100 380,110 430,108 480,118 450,125 400,130 350,125ZM390,92L450,85 510,90 470,105 420,102ZM390,140L440,145 480,165 505,185 480,180 430,165ZM290,165L340,150 370,170Z"/>
                    <path d="M455,490L490,482 520,500 560,545 610,570 626,590 610,625 605,660 570,685 550,735 530,750 525,770 505,775 490,810 480,850 490,860 465,850 455,820 470,740 480,650 450,615 433,575 445,540Z"/>
                    <path d="M755,345L805,342 820,362 860,375 910,370 935,455 950,480 995,478 975,525 940,565 940,620 905,665 905,700 880,738 850,740 835,700 820,640 825,580 805,560 800,525 775,518 740,520 715,505 703,480 705,430 735,380Z"/>
                    <path d="M955,640L980,625 975,665 962,690 952,670Z"/>
                    <path d="M735,305L765,308 765,270 800,258 805,230 790,215 795,200 820,180 850,158 900,152 940,170 930,185 905,172 910,195 950,185 1000,170 1010,155 1000,140 1020,125 1055,120 1015,140 1030,160 1060,165 1070,145 1160,125 1240,135 1310,150 1420,152 1520,158V195L1470,210 1440,260 1415,285 1370,310 1400,270 1425,240 1430,210 1400,215 1340,235 1360,260 1350,300 1325,290 1320,330 1300,320 1270,330 1283,375 1275,410 1230,430 1215,435 1222,470 1210,490 1195,480 1185,450 1190,500 1205,545 1180,510 1165,465 1160,420 1145,420 1110,470 1100,500 1085,480 1065,415 1030,405 1015,420 1015,440 960,475 945,450 920,380 925,350 890,345 870,345 850,320 835,305 855,345 820,310 800,300 770,340 735,340Z"/>
                    <path d="M1245,690L1250,670 1290,650 1310,625 1340,620 1350,640 1365,615 1385,650 1410,690 1410,725 1395,765 1370,760 1345,735 1325,725 1290,735 1255,745ZM1370,770H1388L1382,790ZM1500,750L1508,765 1490,790 1470,808 1480,790Z"/>
                    <path d="M20,1022L120,1025 150,985 180,970 240,965 360,970 480,960 500,930 515,945 512,970 430,988 500,995 530,1012 580,1003 670,995 630,990 700,960 740,945 800,940 900,940 930,930 1000,918 1065,930 1055,955 1120,925 1250,918 1370,925 1480,950 1450,965 1478,985 1440,995 1470,1012 1523,1020V1052H20Z"/>
                    <path d="M675,180L710,182 705,190 680,190ZM750,210L768,205 765,225 775,245 765,262 752,262 758,240ZM740,235L745,250 738,255ZM1175,520L1195,560 1215,580 1200,585 1180,555ZM1235,545L1260,525 1262,555 1245,570ZM1205,585L1260,590 1310,600 1260,602ZM1275,540L1300,545 1285,575ZM1340,565L1400,575 1440,600 1410,600 1360,590ZM1278,460L1295,490 1285,500ZM1280,505L1300,515 1290,530ZM1355,305L1362,330 1340,370 1320,385 1345,350ZM1362,240L1368,280 1362,300ZM440,420L480,440 455,432ZM490,445L515,450 500,455Z"/>
                    </g>
                    <path class="sea" d="M885,315L910,302 945,312 930,322 895,322ZM968,320L975,300 990,318 995,338 980,335ZM850,230L858,200 875,195 862,235Z"/>
                    <path class="bord" d="M183,162V212M260,275H380L415,282 428,310 470,295 500,272M290,370L330,372 350,388 362,398M450,545L475,530 500,540 520,520 540,535 560,540M470,560L465,600 490,615 520,640 528,660 545,690 540,720 530,745M445,600L480,650 485,700 478,760 470,830M480,665L510,670 525,690 545,700M497,495L490,510 505,540M870,155L860,180 850,200M890,165L895,210 850,230M800,255L830,275 870,260 900,240 930,265 900,290 860,290 820,290M830,235L835,270M860,235L870,290M780,275L810,290 850,310M860,295L880,320M965,270L1000,265 1060,240 1110,250 1135,275 1105,310 1075,320 1050,310 1010,305 985,290 968,280ZM1135,275L1190,262 1260,270 1255,300 1200,310 1155,295ZM1260,265L1290,250 1330,285M1080,345L1130,385 1180,390 1190,420M1065,320L1080,350 1050,370 1030,400M995,340L1025,350 1030,400M955,330L970,375 1000,395M920,350L960,365M925,375L970,400M950,455L985,445 1000,420M1150,395L1160,420M890,320L955,320M1190,430L1205,450 1200,480M1370,565V595M740,405L790,440 745,465 705,462M740,405H745V460M775,380L810,415M820,365V400L875,430V370M875,425H925M835,420L790,445 780,480M835,425V490L800,475M870,430L865,490 925,490M835,490L840,520 905,520 950,525M905,490L920,520M925,455L920,500 955,520M845,525L840,575 870,600 895,605 905,560 905,520M895,560L935,575M825,590L860,595V645H822M860,645L885,650 905,625M855,650V690M860,690L885,665 905,660M870,610L905,615M730,470L735,520M755,475L760,515M775,480L775,515M705,485L735,490M1010,330L1060,330M1000,310L1040,335"/>
                    <use href="#conts" class="noise"/>
                    <path class="isl" d="M22,262L70,252 120,235M180,200L250,265M290,380L310,412M375,120L460,100M255,140L350,115 440,125M300,150L420,130M380,100H470M330,165L500,195M545,140L590,212M700,100L660,160M590,84H720M815,105L900,108M960,97L1040,96M1150,102L1240,130M1340,128L1425,125M430,385L480,440M500,280L545,275M455,800L490,858M515,835L530,840M612,852H625M655,865L660,880M105,430L125,438M135,640L205,658M180,595L195,605M45,570L60,620M515,455L518,490M860,300L885,345M800,240L880,300M790,200L850,160M800,330L830,345M1180,510L1215,590M1205,590L1300,602M1280,460L1295,525M1400,570L1445,605M1465,620L1475,670M1495,520L1505,555M1378,435L1375,470M1075,490V560M1320,505L1450,500M1430,500L1480,530M395,545L392,555M668,455L672,462M730,770L720,755M1055,820L1065,828M975,580H1005M490,905L540,895M460,940L510,925M90,1000L150,980M1350,320L1355,300M670,335L650,325M1425,825L1430,855M55,600L35,660M20,150L50,190M430,450L395,455"/>
                  </g>
                  <path d="M20,1022H1523V1052H20Z" fill="#ff7572" stroke="#d94848" stroke-width="1.500" vector-effect="non-scaling-stroke"/>
                  <path d="M1320,297h20v42h31v23h-31v43h-20v-43h-30v-23h30z" fill="#c04bdc"/>
                </svg>
              </div>
            </div>
          </div>
          <div class="btns"><button>Help</button><button>Apply</button><span class="grow"></span><button>Cancel</button><button class="ok">OK</button></div>
        </div>
      </div>
    </section>
  </section>

  <section class="mini">
    <header class="mtitle">*Untitled Project — QGIS</header>
    <div class="bar r1">
      <svg><use href="#save"/></svg><svg><use href="#layout"/></svg><svg><use href="#layouts"/></svg><svg><use href="#style"/></svg><s></s>
      <span class="press"><svg><use href="#hand"/></svg></span><svg><use href="#panto"/></svg><svg><use href="#zin"/></svg><svg><use href="#zout"/></svg><svg><use href="#zfull"/></svg><svg><use href="#zsel"/></svg><svg><use href="#zlay"/></svg><svg><use href="#znat"/></svg><svg><use href="#zlast"/></svg><svg><use href="#znext"/></svg><svg><use href="#view"/></svg><svg><use href="#v3d"/></svg><svg><use href="#bmark"/></svg><svg><use href="#bmarks"/></svg><svg><use href="#clock"/></svg><svg><use href="#refresh"/></svg><s></s>
      <svg><use href="#info"/></svg><svg><use href="#abacus"/></svg><svg><use href="#gear"/></svg><svg><use href="#sigma"/></svg><svg><use href="#table"/></svg><svg class="dd"><use href="#tri"/></svg><svg><use href="#measure"/></svg><svg class="dd"><use href="#tri"/></svg><svg><use href="#tip"/></svg><svg><use href="#action"/></svg><svg class="dd"><use href="#tri"/></svg>
    </div>
    <div class="bar r2">
      <svg><use href="#cut"/></svg><svg><use href="#copy"/></svg><svg><use href="#paste"/></svg><svg><use href="#undo"/></svg><svg><use href="#redo"/></svg><s></s>
      <svg class="tg ty"><use href="#tag"/></svg><svg><use href="#pie"/></svg><em></em>
      <svg class="tg tb" viewBox="0 0 24 24"><use href="#tag"/><use href="#pinr"/></svg><svg class="tg tr"><use href="#tag"/></svg><em class="wide"></em>
      <svg class="tg tz" viewBox="0 0 24 24"><use href="#tag"/><use href="#pinr"/></svg>
      <svg class="tg tz" viewBox="0 0 24 24"><use href="#tag"/><path d="M9,20Q16,13 23,20 16,26 9,20Z" fill="#eee" stroke="#888"/><circle cx="16" cy="20" r="2.500" fill="#777"/></svg>
      <svg class="tg tz" viewBox="0 0 24 24"><use href="#tag"/><rect x="13" y="13" width="11" height="11" rx="2" fill="#aaa"/><path d="M15,18.500h6M18.500,15.500l3,3-3,3" stroke="#fff" fill="none" stroke-width="1.800"/></svg>
      <svg class="tg tz" viewBox="0 0 24 24"><use href="#tag"/><rect x="13" y="13" width="11" height="11" rx="2" fill="#aaa"/><path d="M16,21a3.500,3.500 0 1 0-.5-4" stroke="#fff" fill="none" stroke-width="1.800"/></svg>
      <svg class="tg tz" viewBox="0 0 24 24"><use href="#tag"/><rect x="13" y="13" width="11" height="11" rx="2" fill="#b5b5a0"/><path d="M15.500,21.500l6-6" stroke="#fff" stroke-width="2.400"/></svg><s></s>
      <svg><use href="#db"/></svg><s></s><svg><use href="#meta"/></svg><s></s><svg><use href="#python"/></svg><svg><use href="#green"/></svg><svg><use href="#xml"/></svg><s></s><svg><use href="#helpb"/></svg><s></s>
    </div>
    <div class="bar r3">
      <svg><use href="#pencil"/></svg><svg><use href="#selgrey"/></svg><svg class="dd"><use href="#tri"/></svg><svg><use href="#grideps"/></svg><svg><use href="#polygrey"/></svg><svg class="dd"><use href="#tri"/></svg><s></s>
      <svg><use href="#anno"/></svg><svg class="dd"><use href="#tri"/></svg><svg><use href="#modify"/></svg><svg><use href="#polyadd"/></svg><svg><use href="#lineadd"/></svg><svg><use href="#staradd"/></svg><svg><use href="#textadd"/></svg><em></em>
      <svg><use href="#textbox"/></svg><svg class="dd"><use href="#tri"/></svg><s></s>
      <svg><use href="#pagepin"/></svg><svg><use href="#mappin"/></svg><svg><use href="#magdot"/></svg><svg><use href="#magdots"/></svg><svg><use href="#mapext"/></svg><svg class="dd"><use href="#tri"/></svg><svg><use href="#crsg"/></svg><svg><use href="#xy"/></svg><svg><use href="#wrench"/></svg><s></s>
      <svg><use href="#gsearch"/></svg><svg><use href="#osm"/></svg>
    </div>
    <div class="mcanvas">
      <svg viewBox="21 8 1544 1486" preserveAspectRatio="none">
        <defs>
          <g id="shape">
            <use href="#land"/>
            <path d="M152,912Q158,900 172,901L176,915 170,922 180,930 172,934 158,930Z"/>
            <path d="M127,965L150,932M151,971L180,935M140,945Q150,920 145,935M128,948L140,935M181,932V920M160,930Q158,918 170,918M139,1005L148,990M219,1139L227,1125M373,1284L381,1274M1258,1091L1261,1112M1084,1246V1259M1411,975L1413,958" fill="none"/>
            <path d="M565,391h1M580,388h1M612,378h1M724,357h1M753,379h1M781,361h1M778,380h1M786,328h1M796,323h1M533,414h1M507,443h1M492,465h1M485,472h1M474,483h1M446,512h1M437,524h1M655,368h1M1247,391h1M698,600l2,-3M704,596l2,-4M709,590l2,-4M675,612h2" fill="none" class="specks"/>
          </g>
        </defs>
        <use href="#shape" class="purple" transform="translate(-79,-134)" stroke="#222" stroke-width="1.200"/>
        <use href="#shape" class="brown" stroke="#222" stroke-width="1.200"/>
        <path d="M220,752L236,742 248,738 240,745Z" fill="#fff" stroke="#222" stroke-width="1"/>
      </svg>
    </div>
    <footer class="status small">
      <label class="lb w-coord">Coordinate</label>
      <div class="fld f-coord"></div>
      <svg class="s-mouse"><use href="#mouse"/></svg>
      <label class="lb w-scale">Scale</label>
      <div class="fld combo"><span>1:17108</span><i><svg><use href="#tri"/></svg></i></div>
      <svg class="s-lock"><use href="#lock"/></svg>
      <label class="lb w-mag">Magnifier</label>
      <div class="fld spin"><span>100%</span><i><svg class="up"><use href="#tri"/></svg><svg><use href="#tri"/></svg></i></div>
      <label class="lb w-rot">Rotation</label>
      <div class="fld spin"><span>0.0 °</span><i><svg class="up"><use href="#tri"/></svg><svg><use href="#tri"/></svg></i></div>
      <span class="chk"><svg viewBox="0 0 24 24"><path d="M6,12L10.500,18.500 18,4.500" fill="none" stroke="#111" stroke-width="2.800"/></svg></span>
      <label class="lb w-rend">Render</label>
      <svg class="s-crs"><use href="#nocrs"/></svg>
      <svg class="s-bub"><use href="#bubble"/></svg>
    </footer>
    <span class="corner tr1"></span><span class="corner br1"></span>
  </section>

  <div class="note n1">①</div>
  <div class="note n2">②</div>
  <div class="note n3">③</div>
  <div class="redbox"></div>
  <svg class="arrow" viewBox="2620 1400 210 140"><path d="M2627,1525.500L2800,1422" stroke="#f00" stroke-width="14"/><path d="M2820,1409L2774,1414 2798,1447Z" fill="#f00"/></svg>
</main>
</body>
</html>
```
FILE: styles.css
```
* { box-sizing: border-box; }
body { margin: 0; background: #fff; overflow: hidden; }
h1, h2, h3, h4, h5, ul { margin: 0; padding: 0; font-weight: inherit; font-size: inherit; list-style: none; }
svg { display: block; flex: none; overflow: visible; }
.defs { position: absolute; }
.stage { position: relative; width: 4257px; height: 2044px; overflow: hidden; zoom: 0.96218; font-family: Inter, "Liberation Sans", sans-serif; color: #222; white-space: nowrap; background: #fff; }

/* large QGIS window */
.qgis { position: absolute; left: 4px; top: 0; width: 2878px; height: 2036px; overflow: hidden; border-right: 2.500px solid #adadad; display: flex; flex-direction: column; background: #fff; }
.canvas { height: 1946px; }
.status { height: 90px; background: #ececec; border-top: 2px solid #b4b4b4; display: flex; align-items: center; padding: 7px 0 0 236px; font-size: 33px; color: #262626; }
.status .lb { flex: none; }
.fld { background: #fff; border: .075em solid #a3a3a3; border-radius: .15em; height: 1.97em; display: flex; align-items: center; flex: none; color: #222; }
.w-coord { width: 5.12em; letter-spacing: -.005em; }
.f-coord { width: 11.86em; margin-left: .4em; padding-left: .72em; letter-spacing: .024em; }
.s-mouse { width: 1.36em; height: 1.36em; margin-left: .42em; }
.w-scale { width: 2.55em; margin-left: 1.27em; }
.combo, .spin { width: 8.3em; }
.combo { margin-left: .33em; height: 2.15em; padding-left: .3em; }
.spin { margin-left: .38em; padding-left: .4em; height: 2.03em; }
.combo i, .spin i { margin-left: auto; height: 100%; border-left: .06em solid #b0b0b0; display: flex; flex-direction: column; justify-content: center; align-items: center; background: #f2f2f2; }
.combo i { width: 1.8em; }
.spin i { width: 1.3em; justify-content: space-around; padding: .12em 0; }
.combo svg, .spin svg { width: .6em; height: .46em; }
.up { transform: rotate(180deg); }
.s-lock { width: 1.1em; height: 1.38em; margin-left: 1.13em; }
.w-mag { width: 4.4em; margin-left: .87em; }
.w-rot { width: 3.8em; margin-left: .95em; }
.w-rot + .spin { margin-left: .92em; }
.chk { width: 1.2em; height: 1.2em; border: .06em solid #9b9b9b; background: #fff; margin-left: .66em; }
.w-rend { width: 2.88em; margin-left: .48em; letter-spacing: -.01em; }
.s-crs { width: 1.48em; height: 1.3em; margin-left: 1.85em; }
.w-epsg { width: 5.4em; margin-left: .15em; color: #111; }
.s-bub { width: 1.45em; height: 1.4em; margin-left: 2.14em; }

/* dialog */
.dialog { position: absolute; left: 74px; top: 106px; width: 2550px; height: 1753px; border-radius: 28px; background: #ececec; box-shadow: 0 0 0 1.500px rgba(0,0,0,.28), 0 50px 110px rgba(0,0,0,.5); }
.tbar { height: 86px; border-radius: 28px 28px 0 0; background: #fdf3f0; border-bottom: 2px solid #cfcac8; display: flex; align-items: center; padding-left: 23px; gap: 23.500px; position: relative; }
.dot { width: 36px; height: 36px; border-radius: 50%; border: 1.500px solid rgba(0,0,0,.12); }
.red { background: #ff5f57; } .gray { background: #e0d8d6; } .green { background: #28c840; }
.tbar h1 { flex: 1; text-align: center; padding-right: 202px; font-weight: 700; font-size: 38px; color: #444; letter-spacing: .006em; word-spacing: .02em; }
.body { display: flex; height: 1667px; }
.side { width: 446px; background: #5b5b5b; border-radius: 0 0 0 28px; padding: 2px 2px 0; }
.search { height: 67px; background: #fff; border: 2px solid #c4c4c4; display: flex; align-items: center; padding-left: 22px; color: #8e8e8e; }
.search svg, .finput svg { width: 38px; height: 38px; }
.side ul { margin: 18px -2px 0; color: #fff; font-size: 35px; }
.side li { height: 107.100px; display: flex; align-items: center; padding-left: 13px; gap: 21px; letter-spacing: .014em; }
.side li svg { width: 76px; height: 76px; }
.side li.on { background: #ededed; color: #222; padding-left: 18px; gap: 19px; }
.side li.on svg { width: 82px; height: 70px; }
.vgrip { width: 16px; margin-top: 815px; height: 50px; background: radial-gradient(circle, #bbb 1.500px, transparent 2px) 3px 0 / 8px 8px repeat-y; }
.pane { width: 2077px; }
.pane h2 { height: 68px; display: flex; align-items: center; padding: 7px 0 0 1px; font-weight: 700; font-size: 38px; letter-spacing: .0135em; word-spacing: .04em; }
.group { height: 1500px; border: 2px solid #d6d6d6; background: #e8e8e8; border-radius: 4px; padding: 39px 35px 0 31px; }
.norow { height: 48px; display: flex; align-items: center; gap: 15px; font-size: 36px; letter-spacing: .028em; }
.cbx { width: 41px; height: 41px; background: #fff; border: 2px solid #b0b0b0; }
.cbx svg { width: 37px; height: 37px; }
.filter { margin-top: 28px; height: 70px; display: flex; align-items: center; font-size: 36px; letter-spacing: .02em; color: #b2b2b2; }
.filter label { width: 111px; }
.finput { flex: 1; height: 70px; background: #fff; border: 2.500px solid #a6a6a6; border-radius: 7px; display: flex; align-items: center; padding-left: 24px; color: #d8d8d8; margin-right: -1px; }
.h-rec { height: 83px; display: flex; align-items: center; padding-top: 4px; font-weight: 700; font-size: 38px; letter-spacing: .008em; word-spacing: .05em; color: #adadad; }
.tbl { border: 2px solid #bcbcbc; background: #ebebeb; }
.t1 { height: 374px; } .t2 { height: 342px; }
.view { display: flex; height: calc(100% - 42px); }
.grid { flex: 1; overflow: hidden; display: flex; flex-direction: column; }
.hd { flex: none; height: 51px; border-bottom: 3px solid #a3a3a3; background: linear-gradient(#f6f6f6, #e8e8e8); display: flex; align-items: center; font-size: 32.500px; color: #828282; }
.hd span:first-child { width: 1297px; padding-left: 8px; height: 100%; border-right: 2px solid #c4c4c4; display: flex; align-items: center; letter-spacing: .009em; }
.hd span:last-child { padding-left: 8px; }
.hd span { padding-top: 2px; }
.rows { flex: 1; overflow: hidden; font-size: 36px; color: #b4b4b4; letter-spacing: .029em; }
.rows div { height: 47.800px; display: flex; align-items: center; }
.t2 .rows div { height: 53.500px; }
.rows span:first-child { width: 1308px; padding-left: 11px; }
.t2 .rows span:first-child { padding-left: 131px; }
.rows .alt { background: #f4f6f5; }
.rows .sel { background: #dcdcdc; color: #a4a4a4; }
.vs { width: 42px; border-left: 2px solid #bcbcbc; display: flex; flex-direction: column; background: #e2e2e2; flex: none; }
.vs b, .hs b { flex: none; width: 41px; height: 41px; background: #fafafa; display: flex; align-items: center; justify-content: center; }
.vs b:first-child { border-bottom: 2px solid #b5b5b5; }
.vs b:last-child { border-top: 2px solid #b5b5b5; }
.vs b svg, .hs b svg { width: 24px; height: 17px; }
.vs em { background: linear-gradient(90deg, #fff, #efefef); border-bottom: 2px solid #b5b5b5; }
.vs u, .hs u { flex: 1; }
.vs .pre { flex: none; height: 21px; border-bottom: 2px solid #b5b5b5; }
.th1 { height: 82px; } .th2 { height: 80px; } .th3 { height: 80px; }
.hs { height: 42px; border-top: 2px solid #bcbcbc; display: flex; background: #e0e0e0; }
.hs b:first-child { border-right: 2px solid #b5b5b5; }
.hs em { width: 1838px; background: linear-gradient(#fff, #efefef); border-right: 2px solid #b5b5b5; }
.hs u { border-right: 2px solid #b5b5b5; }
.hs i { width: 42px; border-left: 2px solid #bcbcbc; background: #ebebeb; }
.lf { transform: rotate(90deg); } .rt { transform: rotate(-90deg); }
.h-pre { height: 92px; display: flex; align-items: center; justify-content: space-between; position: relative; padding-bottom: 4px; }
.h-pre h3 { font-weight: 700; font-size: 38px; color: #adadad; letter-spacing: .008em; word-spacing: .05em; }
.hide { display: flex; align-items: center; gap: 14px; font-size: 27px; color: #b4b4b4; padding-right: 17px; letter-spacing: .018em; }
.off { background: none; border-color: #b8b8b8; }
.hgrip { position: absolute; left: 984px; top: 4px; width: 52px; height: 8px; background: radial-gradient(circle, #b5b5b5 1.500px, transparent 2px) 0 0 / 8.700px 8px repeat-x; }
.split { height: 15px; position: relative; }
.low { display: flex; justify-content: space-between; height: 371px; }
.infop { width: 994px; border: 2px solid #bcbcbc; background: #ebebeb; display: flex; color: #b4b4b4; overflow: hidden; }
.txt { flex: 1; padding-left: 14px; }
.txt h4 { font-weight: 700; font-size: 37px; line-height: 44px; margin-top: 14px; }
.txt h5 { font-weight: 700; font-size: 32px; line-height: 40px; margin-top: 38px; letter-spacing: .03em; }
.txt ul { margin: 35px 0 0 208px; font-size: 32px; line-height: 38.800px; letter-spacing: .028em; }
.txt li { position: relative; }
.txt li::before { content: ""; position: absolute; left: -24px; top: 10px; width: 13px; height: 13px; border-radius: 50%; background: #b2b2b2; }
.mapp { width: 994px; border: 2px solid #bcbcbc; background: #fff; padding: 3px 0 0 153px; }
.world { width: 700px; height: 365px; }
.coast path { fill: #fda9a1; stroke: #b9625a; stroke-width: 1.900px; vector-effect: non-scaling-stroke; stroke-linejoin: round; }
.coast .sea { fill: #ffb9bc; }
.coast .bord { fill: none; stroke-width: 2.100px; }
.noise { stroke-dasharray: 5 9 3 14 8 6; opacity: .75; }
.coast .isl { fill: none; stroke: #a9534b; stroke-width: 4.500px; stroke-dasharray: 3 3 5 2 2 4; opacity: .85; }
.btns { display: flex; margin: 20px 0 0 -2px; width: 2079px; gap: 20px; }
.btns button { width: 237px; height: 71px; border: 2.500px solid #a9a9a9; border-radius: 7px; background: linear-gradient(#fff, #f0f0f0); font: 400 36px Inter, sans-serif; letter-spacing: .01em; color: #111; padding: 0; -webkit-text-stroke: .5px #111; }
.btns .ok { border-color: #2f95ec; background: linear-gradient(#fff, #dfe6ee); }
.btns .grow { flex: 1; }

/* small QGIS window */
.mini { position: absolute; left: 2711px; top: 458px; width: 1546px; height: 1222px; background: #fff; overflow: hidden; border-right: 4px solid #fff; }
.mtitle { height: 36px; background: #faf7ef; border-bottom: 1.500px solid #cfcfcf; padding: 0 0 3px 460px; font-size: 17.300px; font-weight: 700; color: #444; display: flex; align-items: center; letter-spacing: 0; }
.bar { display: flex; align-items: center; background: linear-gradient(#f5f5f5, #ebebeb); border-bottom: 2px solid #b8b8b8; overflow: hidden; }
.bar > svg, .press { flex: none; width: 30px; height: 30px; margin: 0 6.360px; }
.press { width: 41px; height: 42px; margin: 0 .86px; background: #dcdcdc; border: 1.500px solid #b0b0b0; border-radius: 3px; display: flex; align-items: center; justify-content: center; }
.press svg { width: 30px; height: 32px; }
.bar > .dd { width: 10px; height: 8px; margin: 0 2.600px; }
.bar s { flex: none; width: 7px; height: 32px; margin: 0 7px; background: radial-gradient(circle, #b0b0b0 1px, transparent 1.400px) 0 0 / 3.500px 4px; }
.bar em { flex: none; width: 1.500px; height: 36px; margin: 0 3.500px; background: #c8c8c8; }
.bar .wide { margin: 0 4.500px; }
.r1 { height: 49px; padding-left: 6px; } .r2 { height: 50px; padding-top: 1px; } .r3 { height: 49px; padding-top: 4px; }
.r2 > svg:first-child { margin-left: -20.600px; }
.r3 > svg:first-child { margin-left: -11px; }
.tagtxt { fill: #222; }
.ty { fill: #ffe23a; stroke: #b09400; } .tb { fill: #c4e2fc; stroke: #2a8ae8; } .tr { fill: #ffb8bc; stroke: #e81020; }
.tz { fill: #d8d6bc; stroke: #999; opacity: .5; }
.mcanvas { margin-top: 3px; border-top: 1px solid #ddd; height: 995px; }
.mcanvas svg { width: 1542px; height: 994px; }
.mcanvas use, .mcanvas path { vector-effect: non-scaling-stroke; }
.purple { fill: #9d7dba; } .brown { fill: #ae6e52; }
.specks { stroke-width: 2.500px; }
.status.small { height: 41px; border-top-width: 1.500px; font-size: 14.500px; padding: 2px 0 0 601px; }
.small .f-coord { width: 40px; padding: 0; }
.small .spin { width: 8.2em; }
.small .chk { margin-left: .5em; }
.small .w-rend { width: 50px; margin-left: .42em; letter-spacing: 0; }
.small .s-crs { margin-left: 20px; }
.small .s-bub { margin-left: 31px; }
.corner { position: absolute; right: 0; width: 10px; height: 10px; }
.tr1 { top: 0; background: radial-gradient(circle at 0 100%, transparent 9.500px, #3f8ecb 10px); }
.br1 { bottom: 0; background: radial-gradient(circle at 0 0, transparent 9.500px, #b5491c 10px); }

/* annotations */
.note { position: absolute; color: #f00; background: rgba(255,255,255,.62); display: flex; align-items: center; justify-content: center; font: 500 98px/1 "Noto Sans CJK JP", sans-serif; -webkit-text-stroke: 2.500px #f00; }
.n1 { left: 2740px; top: 1785px; width: 160px; height: 144px; }
.n2 { left: 599px; top: 176px; width: 160px; height: 145px; }
.n3 { left: 2466px; top: 1606px; width: 160px; height: 145px; }
.redbox { position: absolute; left: 2450px; top: 1941px; width: 440px; height: 101px; border: 14px solid #f00; }
.arrow { position: absolute; left: 2620px; top: 1400px; width: 210px; height: 140px; }
```
